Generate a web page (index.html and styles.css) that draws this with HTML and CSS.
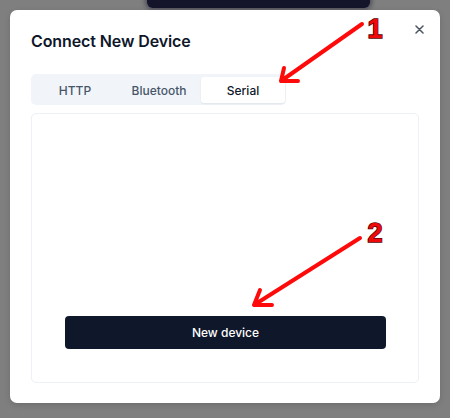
FILE: index.html
```html
<!DOCTYPE html>
<html lang="en">
<head>
<meta charset="utf-8">
<title>Connect New Device</title>
<link rel="stylesheet" href="styles.css">
</head>
<body>
  <div class="backdrop-btn"></div>
  <div class="modal">
    <h2 class="title">Connect New Device</h2>
    <button class="close" aria-label="Close">
      <svg width="9" height="9" viewBox="0 0 9 9"><path d="M1 1L8 8M8 1L1 8" stroke="#4b5563" stroke-width="1.5" stroke-linecap="round"/></svg>
    </button>
    <div class="tabs">
      <div class="tab">HTTP</div>
      <div class="tab">Bluetooth</div>
      <div class="tab active">Serial</div>
    </div>
    <div class="panel">
      <button class="primary">New device</button>
    </div>
  </div>
  <svg class="annot" width="450" height="418" viewBox="0 0 450 418">
    <g stroke="#ff0a0a" stroke-width="4" stroke-linecap="round" stroke-linejoin="round" fill="none">
      <path d="M362 24L281 81M284 68L281 81L298 81"/>
      <path d="M360 238L254 305M260 290L254 305L272 305"/>
    </g>
    <text class="num" x="375" y="38">1</text>
    <text class="num" x="375" y="242">2</text>
  </svg>
</body>
</html>
```
FILE: styles.css
```css
html, body {
  margin: 0;
  padding: 0;
}
body {
  width: 450px;
  height: 418px;
  background: #7f7f7f;
  font-family: Inter, "Noto Sans", sans-serif;
  position: relative;
  overflow: hidden;
  padding-top: 10px;
  box-sizing: border-box;
}
.backdrop-btn {
  position: absolute;
  left: 147px;
  top: -10px;
  width: 223px;
  height: 18px;
  background: #14142b;
  border-radius: 6px;
  box-shadow: 0 0 4px 2px rgba(20, 20, 43, 0.45);
}
.modal {
  position: relative;
  margin-left: 10px;
  width: 430px;
  height: 393px;
  box-sizing: border-box;
  background: #fff;
  border-radius: 7px;
  padding: 19px 21px 20px 21px;
  display: flex;
  flex-direction: column;
  box-shadow: 0 2px 6px rgba(0, 0, 0, 0.15);
}
.title {
  margin: 0;
  font-size: 16px;
  line-height: 24px;
  font-weight: 600;
  color: #0f172a;
  letter-spacing: -0.1px;
}
.close {
  position: absolute;
  right: 16px;
  top: 15px;
  width: 9px;
  height: 9px;
  padding: 0;
  border: 0;
  background: none;
  display: flex;
}
.tabs {
  margin-top: 21px;
  width: 255px;
  height: 31px;
  box-sizing: border-box;
  background: #f1f5f9;
  border-radius: 5px;
  padding: 3px 1px 2px 2px;
  display: grid;
  grid-template-columns: repeat(3, 84px);
}
.tab {
  display: flex;
  align-items: center;
  justify-content: center;
  font-size: 12px;
  font-weight: 500;
  color: #475569;
  border-radius: 3px;
}
.tab.active {
  background: #fff;
  color: #0f172a;
  box-shadow: 0 1px 2px rgba(15, 23, 42, 0.08);
}
.panel {
  margin-top: 8px;
  flex: 1;
  border: 1px solid #eef1f5;
  border-radius: 5px;
  display: flex;
  flex-direction: column;
  justify-content: flex-end;
  padding: 0 32px 33px 33px;
}
.primary {
  height: 33px;
  border: 0;
  border-radius: 4px;
  background: #0f172a;
  color: #fff;
  font-family: Inter, "Noto Sans", sans-serif;
  font-size: 12px;
  font-weight: 500;
}
.annot {
  position: absolute;
  left: 0;
  top: 0;
  pointer-events: none;
}
.num {
  font-family: "Liberation Sans", Arial, sans-serif;
  font-weight: 700;
  font-size: 27px;
  text-anchor: middle;
  fill: #ee0a0a;
  stroke: #5a0000;
  stroke-width: 1.6px;
  paint-order: stroke;
}
```
